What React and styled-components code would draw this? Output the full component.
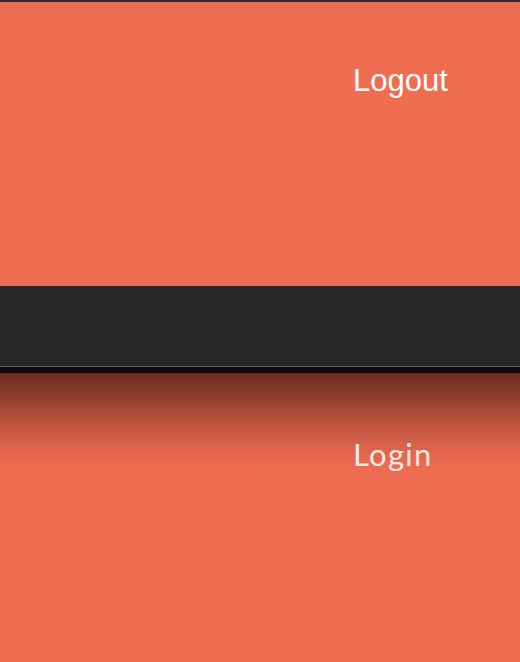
import styled, { createGlobalStyle } from "styled-components";

const GlobalStyle = createGlobalStyle`
  html, body {
    margin: 0;
    padding: 0;
    background: #282828;
  }
  body {
    width: 520px;
    height: 662px;
    overflow: hidden;
  }
`;

const Page = styled.div`
  display: flex;
  flex-direction: column;
  height: 662px;
`;

const Header = styled.header`
  height: 284px;
  border-top: 2px solid #2b2b2b;
  background: #ef6e51;
`;

const Band = styled.div`
  height: 80px;
  background: #282828;
  border-bottom: 1px solid #5e5e5e;
`;

const Lower = styled.section`
  flex: 1;
  border-top: 6px solid #0c0c0c;
  background: linear-gradient(
    #6b2d21 0px,
    #8a3b2c 20px,
    #ab4b39 40px,
    #c95b45 60px,
    #df654b 78px,
    #ec6c50 92px,
    #ef6e51 105px,
    #ef6e51 100%
  );
`;

const Nav = styled.nav`
  display: flex;
  justify-content: flex-end;
  padding: ${(p) => p.$top}px 70px 0 0;
`;

const NavLink = styled.a`
  display: block;
  min-width: 97px;
  font-family: ${(p) => (p.$alt ? '"Lato", "Open Sans", sans-serif' : '"Liberation Sans", Arial, sans-serif')};
  font-size: 31px;
  line-height: 1;
  letter-spacing: ${(p) => (p.$alt ? "1.3px" : "0")};
  color: ${(p) => (p.$alt ? "#f3e9e6" : "#ffffff")};
  text-decoration: none;
  cursor: pointer;
`;

export default function App() {
  return (
    <Page>
      <GlobalStyle />
      <Header>
        <Nav $top={63}>
          <NavLink>Logout</NavLink>
        </Nav>
      </Header>
      <Band />
      <Lower>
        <Nav $top={66}>
          <NavLink $alt>Login</NavLink>
        </Nav>
      </Lower>
    </Page>
  );
}
